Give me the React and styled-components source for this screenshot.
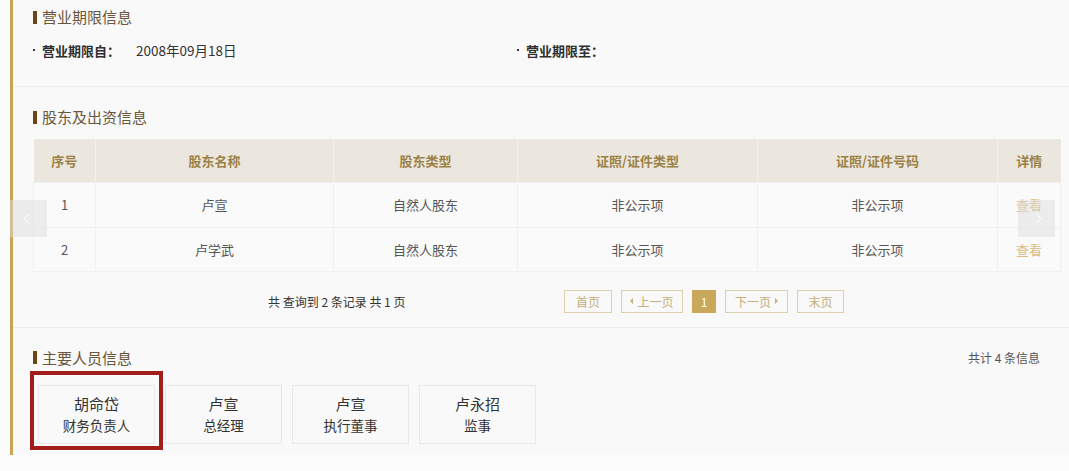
import React from "react";
import styled, { createGlobalStyle } from "styled-components";

const Global = createGlobalStyle`
  html, body { margin: 0; padding: 0; background: #fcfcfc; }
  body { font-family: "Noto Sans CJK SC", "Noto Sans", "Liberation Sans", sans-serif; }
  * { box-sizing: border-box; }
`;

const Page = styled.div`
  position: relative;
  width: 1069px;
  height: 471px;
  padding-left: 10px;
  background: #fcfcfc;
  overflow: hidden;
`;

const Main = styled.div`
  height: 455px;
  border-left: 3px solid #c9a455;
  background: #f9f9f9;
`;

const Section = styled.section`
  padding: ${(p) => p.$pad};
  border-bottom: ${(p) => (p.$divider ? "1px solid #ececec" : "none")};
`;

const TitleRow = styled.div`
  display: flex;
  align-items: center;
  justify-content: space-between;
  height: 20px;
`;

const Title = styled.h3`
  margin: 0;
  display: flex;
  align-items: center;
  gap: 5px;
  font-size: 15px;
  font-weight: 400;
  color: #6a573b;
  line-height: 20px;
  &::before {
    content: "";
    width: 4px;
    height: 13px;
    background: #6b4516;
  }
`;

const Count = styled.span`
  font-size: 12px;
  color: #555;
  margin-right: 20px;
`;

const Fields = styled.div`
  display: grid;
  grid-template-columns: 484px 1fr;
  margin-top: 13px;
  height: 20px;
  align-items: center;
`;

const Field = styled.div`
  display: flex;
  align-items: center;
  font-size: 13px;
  color: #333;
  &::before {
    content: "";
    width: 2px;
    height: 2px;
    margin: 0 7px 1px 0;
    background: #333;
  }
`;

const Label = styled.span`
  font-weight: 700;
  color: #2f2f2f;
  width: 94px;
`;

const Value = styled.span`
  font-size: 13.5px;
  color: #333;
`;

const Table = styled.table`
  margin-top: 12px;
  width: 1027px;
  border-collapse: collapse;
  table-layout: fixed;
  font-size: 13px;
`;

const Th = styled.th`
  height: 43px;
  background: #ebe6de;
  color: #9c8147;
  font-weight: 700;
  text-align: center;
  border-left: 1px solid #f3f0ea;
  &:first-child { border-left: none; }
`;

const Td = styled.td`
  height: ${(p) => p.$h || 45}px;
  background: #fafafa;
  color: ${(p) => (p.$link ? "#dcbc82" : "#555")};
  text-align: center;
  border: 1px solid #f1f1f1;
`;

const PagerRow = styled.div`
  display: flex;
  align-items: center;
  margin-top: 18px;
  height: 23px;
`;

const Info = styled.span`
  margin-left: 235px;
  width: 296px;
  font-size: 12px;
  color: #333;
`;

const Pager = styled.div`
  display: flex;
  gap: 9px;
`;

const PageBtn = styled.span`
  display: flex;
  align-items: center;
  justify-content: center;
  gap: 4px;
  width: ${(p) => p.$w}px;
  height: 23px;
  border: 1px solid ${(p) => (p.$active ? "#c9a85c" : "#dccfae")};
  background: ${(p) => (p.$active ? "#c9a85c" : "transparent")};
  color: ${(p) => (p.$active ? "#fff" : "#c4ae7c")};
  font-size: 12px;
`;

const Caret = styled.span`
  width: 0;
  height: 0;
  border-top: 3px solid transparent;
  border-bottom: 3px solid transparent;
  ${(p) =>
    p.$dir === "left"
      ? "border-right: 3px solid #c4ae7c;"
      : "border-left: 3px solid #c4ae7c;"}
`;

const Cards = styled.div`
  display: flex;
  gap: 10px;
  margin-top: 17px;
  padding-left: 5px;
`;

const Card = styled.div`
  position: relative;
  width: 117px;
  height: 59px;
  border: 1px solid #e8e8e8;
  background: #f9f9f9;
  display: flex;
  flex-direction: column;
  align-items: center;
  justify-content: center;
  color: #333;
  ${(p) =>
    p.$highlight &&
    `
    &::after {
      content: "";
      position: absolute;
      left: -9px;
      right: -9px;
      top: -15px;
      bottom: -7px;
      border: 4px solid #a41d1d;
    }
  `}
`;

const Name = styled.div`
  font-size: 15px;
  line-height: 22px;
`;

const Role = styled.div`
  font-size: 13.5px;
  line-height: 20px;
`;

const NavArrow = styled.div`
  position: absolute;
  top: 200px;
  ${(p) => (p.$side === "left" ? "left: 10px;" : "left: 1018px;")}
  width: 37px;
  height: 37px;
  background: rgba(222, 222, 222, 0.5);
  display: flex;
  align-items: center;
  justify-content: center;
  &::before {
    content: "";
    width: 6px;
    height: 6px;
    border-left: 1px solid rgba(255, 255, 255, 0.9);
    border-bottom: 1px solid rgba(255, 255, 255, 0.9);
    transform: rotate(${(p) => (p.$side === "left" ? "45deg" : "-135deg")});
  }
`;

const shareholders = [
  { no: 1, name: "卢宣", type: "自然人股东" },
  { no: 2, name: "卢学武", type: "自然人股东" },
];

const people = [
  { name: "胡命岱", role: "财务负责人", hl: true },
  { name: "卢宣", role: "总经理" },
  { name: "卢宣", role: "执行董事" },
  { name: "卢永招", role: "监事" },
];

export default function App() {
  return (
    <>
      <Global />
      <Page>
        <Main>
          <Section $pad="7px 9px 26px 20px" $divider>
            <TitleRow>
              <Title>营业期限信息</Title>
            </TitleRow>
            <Fields>
              <Field>
                <Label>营业期限自：</Label>
                <Value>2008年09月18日</Value>
              </Field>
              <Field>
                <Label>营业期限至：</Label>
              </Field>
            </Fields>
          </Section>

          <Section $pad="20px 9px 14px 20px" $divider>
            <TitleRow>
              <Title>股东及出资信息</Title>
            </TitleRow>
            <Table>
              <colgroup>
                <col style={{ width: 62 }} />
                <col style={{ width: 238 }} />
                <col style={{ width: 184 }} />
                <col style={{ width: 240 }} />
                <col style={{ width: 240 }} />
                <col style={{ width: 63 }} />
              </colgroup>
              <thead>
                <tr>
                  <Th>序号</Th>
                  <Th>股东名称</Th>
                  <Th>股东类型</Th>
                  <Th>证照/证件类型</Th>
                  <Th>证照/证件号码</Th>
                  <Th>详情</Th>
                </tr>
              </thead>
              <tbody>
                {shareholders.map((s, i) => {
                  const h = i === 0 ? 45 : 44;
                  return (
                    <tr key={s.no}>
                      <Td $h={h}>{s.no}</Td>
                      <Td $h={h}>{s.name}</Td>
                      <Td $h={h}>{s.type}</Td>
                      <Td $h={h}>非公示项</Td>
                      <Td $h={h}>非公示项</Td>
                      <Td $h={h} $link>查看</Td>
                    </tr>
                  );
                })}
              </tbody>
            </Table>
            <PagerRow>
              <Info>共 查询到 2 条记录 共 1 页</Info>
              <Pager>
                <PageBtn $w={48}>首页</PageBtn>
                <PageBtn $w={62}>
                  <Caret $dir="left" />上一页
                </PageBtn>
                <PageBtn $w={24} $active>
                  1
                </PageBtn>
                <PageBtn $w={63}>
                  下一页<Caret $dir="right" />
                </PageBtn>
                <PageBtn $w={47}>末页</PageBtn>
              </Pager>
            </PagerRow>
          </Section>

          <Section $pad="20px 9px 0 20px">
            <TitleRow>
              <Title>主要人员信息</Title>
              <Count>共计 4 条信息</Count>
            </TitleRow>
            <Cards>
              {people.map((p, i) => (
                <Card key={i} $highlight={p.hl}>
                  <Name>{p.name}</Name>
                  <Role>{p.role}</Role>
                </Card>
              ))}
            </Cards>
          </Section>
        </Main>
        <NavArrow $side="left" />
        <NavArrow $side="right" />
      </Page>
    </>
  );
}
